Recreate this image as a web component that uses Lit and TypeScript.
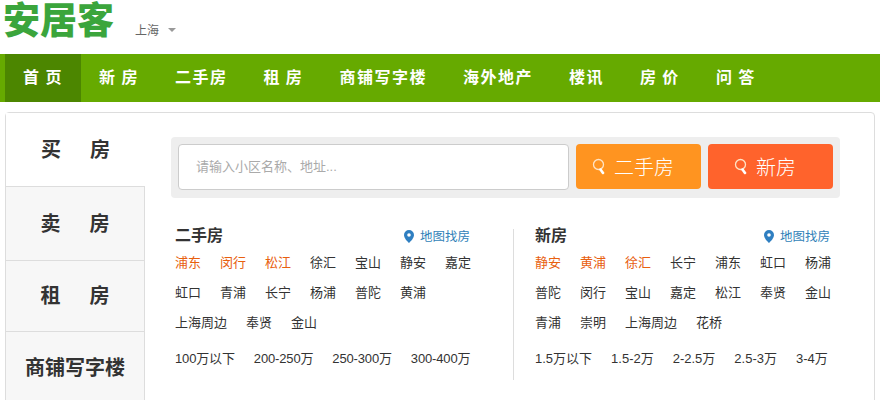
import { LitElement, html, css, svg } from 'lit';
import { customElement } from 'lit/decorators.js';

type Column = {
    title: string;
    districts: string[][];
    prices: string[];
};

const NAV = ['首 页', '新 房', '二手房', '租 房', '商铺写字楼', '海外地产', '楼讯', '房 价', '问 答'];
const TABS = ['买 房', '卖 房', '租 房', '商铺写字楼'];
const HOT = 3;

const COLUMNS: Column[] = [
    {
        title: '二手房',
        districts: [
            ['浦东', '闵行', '松江', '徐汇', '宝山', '静安', '嘉定'],
            ['虹口', '青浦', '长宁', '杨浦', '普陀', '黄浦'],
            ['上海周边', '奉贤', '金山'],
        ],
        prices: ['100万以下', '200-250万', '250-300万', '300-400万'],
    },
    {
        title: '新房',
        districts: [
            ['静安', '黄浦', '徐汇', '长宁', '浦东', '虹口', '杨浦'],
            ['普陀', '闵行', '宝山', '嘉定', '松江', '奉贤', '金山'],
            ['青浦', '崇明', '上海周边', '花桥'],
        ],
        prices: ['1.5万以下', '1.5-2万', '2-2.5万', '2.5-3万', '3-4万'],
    },
];

const searchIcon = svg`<svg class="search-icon" width="14" height="17" viewBox="0 0 14 17">
    <circle cx="6.5" cy="6.5" r="5" fill="none" stroke="#ffe3c4" stroke-width="1.3"/>
    <path d="M8.5 11.5l2.5 3.5" stroke="#fff" stroke-width="2.6" stroke-linecap="round"/>
</svg>`;

const pinIcon = svg`<svg class="pin" width="10" height="13" viewBox="0 0 10 13">
    <path fill-rule="evenodd" fill="#2f7fc1" d="M5 0a5 5 0 0 1 5 5c0 3-3 6-5 8-2-2-5-5-5-8a5 5 0 0 1 5-5zm0 3.2a1.8 1.8 0 1 0 0 3.6 1.8 1.8 0 0 0 0-3.6z"/>
</svg>`;

@customElement('app-root')
export class AppRoot extends LitElement {
    static styles = css`
        :host {
            display: block;
            width: 880px;
            height: 400px;
            overflow: hidden;
            background: #fff;
            font-family: "Liberation Sans", "Noto Sans CJK SC", sans-serif;
            color: #333;
        }
        .top {
            height: 54px;
            display: flex;
            align-items: center;
            padding-left: 3px;
        }
        .logo {
            font-size: 37px;
            line-height: 40px;
            font-weight: 900;
            color: #3ba53c;
            margin-top: -10px;
        }
        .city {
            margin-left: 21px;
            font-size: 12px;
            color: #666;
            display: flex;
            align-items: center;
            margin-top: 4px;
        }
        .caret {
            margin-left: 9px;
            margin-top: 2px;
            border: 4px solid transparent;
            border-top-color: #999;
            border-bottom-width: 0;
        }
        .nav {
            height: 48px;
            background: #66aa00;
            display: flex;
            padding-left: 5px;
        }
        .nav-item {
            padding: 0 18px;
            line-height: 48px;
            font-size: 16px;
            font-weight: 700;
            letter-spacing: 1.5px;
            word-spacing: -1px;
            color: #fff;
            white-space: pre;
        }
        .nav-item.active {
            background: #4c8600;
        }
        .card {
            margin: 10px 5px 0;
            height: 320px;
            box-sizing: border-box;
            border: 1px solid #ddd;
            border-radius: 4px;
            display: flex;
        }
        .tabs {
            width: 139px;
            flex: none;
        }
        .tab {
            height: 73px;
            display: flex;
            align-items: center;
            justify-content: center;
            box-sizing: border-box;
            padding-bottom: 3px;
            font-size: 20px;
            font-weight: 700;
            word-spacing: 23.5px;
            color: #333;
            background: #f7f7f7;
            border-right: 1px solid #ddd;
            border-top: 1px solid #ddd;
        }
        .tab:nth-child(2) {
            height: 74px;
        }
        .tab:nth-child(3) {
            height: 71px;
        }
        .tab.current {
            background: #fff;
            border: none;
        }
        .main {
            flex: 1;
            padding: 24px 35px 0 26px;
        }
        .search {
            height: 61px;
            box-sizing: border-box;
            padding: 7px;
            background: #eee;
            border-radius: 4px;
            display: flex;
            gap: 7px;
        }
        .input {
            width: 391px;
            height: 46px;
            box-sizing: border-box;
            background: #fff;
            border: 1px solid #ccc;
            border-radius: 4px;
            padding-left: 17px;
            line-height: 44px;
            font-size: 13px;
            color: #aaa;
        }
        .btn {
            width: 125px;
            height: 45px;
            box-sizing: border-box;
            padding-right: 11px;
            border-radius: 4px;
            display: flex;
            align-items: center;
            justify-content: center;
            gap: 8px;
            font-size: 20px;
            font-weight: 300;
            color: #fff;
        }
        .btn.second {
            background: #ff9420;
        }
        .btn.fresh {
            background: #ff632c;
        }
        .columns {
            display: flex;
            margin-top: 31px;
            padding-left: 4px;
        }
        .col {
            width: 295px;
        }
        .divider {
            width: 1px;
            height: 151px;
            background: #ddd;
            margin: 0 21px 0 43px;
        }
        .col-head {
            display: flex;
            justify-content: space-between;
            align-items: center;
            height: 12px;
            margin-bottom: 7px;
        }
        .col-title {
            font-size: 16px;
            font-weight: 700;
            color: #333;
            margin-top: -2px;
        }
        .map {
            display: flex;
            align-items: center;
            gap: 6px;
            font-size: 12.5px;
            color: #2f7fb8;
        }
        .pin {
            margin-top: 2px;
        }
        .row {
            display: flex;
            gap: 19px;
            height: 30px;
            line-height: 30px;
            font-size: 13px;
            color: #333;
            white-space: nowrap;
        }
        .row .hot {
            color: #e8600f;
        }
        .prices {
            margin-top: 6px;
        }
        .col:first-child .prices {
            letter-spacing: -0.15px;
        }
    `;

    private renderColumn(col: Column) {
        return html`
            <div class="col">
                <div class="col-head">
                    <span class="col-title">${col.title}</span>
                    <span class="map">${pinIcon}地图找房</span>
                </div>
                ${col.districts.map((row, r) => html`
                    <div class="row">
                        ${row.map((name, i) => html`<span class=${r === 0 && i < HOT ? 'hot' : ''}>${name}</span>`)}
                    </div>
                `)}
                <div class="row prices">
                    ${col.prices.map((p) => html`<span>${p}</span>`)}
                </div>
            </div>
        `;
    }

    render() {
        return html`
            <div class="top">
                <div class="logo">安居客</div>
                <div class="city">上海<i class="caret"></i></div>
            </div>
            <div class="nav">
                ${NAV.map((item, i) => html`<div class="nav-item ${i === 0 ? 'active' : ''}">${item}</div>`)}
            </div>
            <div class="card">
                <div class="tabs">
                    ${TABS.map((tab, i) => html`<div class="tab ${i === 0 ? 'current' : ''}">${tab}</div>`)}
                </div>
                <div class="main">
                    <div class="search">
                        <div class="input">请输入小区名称、地址...</div>
                        <div class="btn second">${searchIcon}二手房</div>
                        <div class="btn fresh">${searchIcon}新房</div>
                    </div>
                    <div class="columns">
                        ${this.renderColumn(COLUMNS[0])}
                        <div class="divider"></div>
                        ${this.renderColumn(COLUMNS[1])}
                    </div>
                </div>
            </div>
        `;
    }
}
